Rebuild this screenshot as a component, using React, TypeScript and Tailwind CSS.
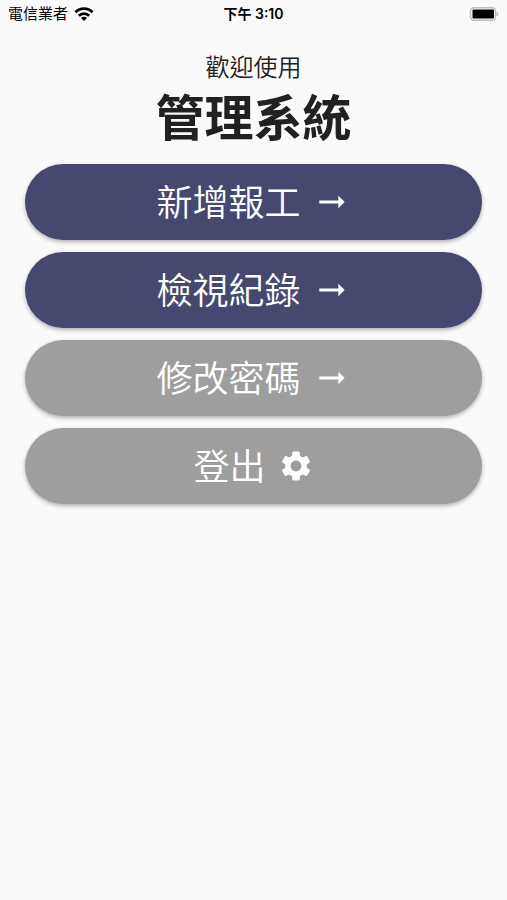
import { MdArrowRightAlt, MdSettings } from "react-icons/md";

interface MenuButtonProps {
  label: string;
  color: string;
  icon: "arrow" | "settings";
}

const MenuButton: React.FC<MenuButtonProps> = ({ label, color, icon }) => {
  return (
    <button
      type="button"
      className={`flex h-[76px] w-full items-center justify-center gap-3 rounded-full text-4xl font-[350] text-white shadow-[0_2px_4px_rgba(0,0,0,0.3)] ${color}`}
    >
      <span className="pt-0.5 leading-none">{label}</span>
      {icon === "arrow" ? <MdArrowRightAlt className="size-[38px]" /> : <MdSettings className="size-9" />}
    </button>
  );
};

const StatusBar = () => {
  return (
    <header className="grid h-7 grid-cols-3 items-center px-2 text-sm text-black">
      <div className="flex items-center gap-1.5">
        <span className="text-[15px]">電信業者</span>
        <svg viewBox="0 0 20 14" className="h-3.5 w-5" fill="none" stroke="currentColor" strokeWidth="2.8">
          <path d="M1.5 5.2a12 12 0 0 1 17 0" />
          <path d="M4.8 8.7a7.4 7.4 0 0 1 10.4 0" />
          <path d="M10 14 7 10.9a4.2 4.2 0 0 1 6 0Z" fill="currentColor" stroke="none" />
        </svg>
      </div>
      <time className="text-center font-semibold">下午 3:10</time>
      <svg viewBox="0 0 30 14" className="h-3.5 w-[30px] justify-self-end">
        <rect x="1.5" y="0.7" width="25" height="12.6" rx="3.5" fill="#fafafa" stroke="#bdbdbd" strokeWidth="1.4" />
        <rect x="3.5" y="2.6" width="21.5" height="8.8" rx="1" />
        <path d="M27.5 4.5c2.5 1 2.5 4 0 5Z" fill="#bdbdbd" />
      </svg>
    </header>
  );
};

export default function App() {
  return (
    <div className="min-h-screen bg-[#fafafa] font-['Inter','Noto_Sans_CJK_TC',sans-serif]">
      <StatusBar />
      <main className="px-[25px] pt-[22px]">
        <h1 className="text-center text-[#212121]">
          <span className="block text-2xl leading-9 font-[350]">歡迎使用</span>
          <span className="block text-[49px] leading-[66px] font-bold">管理系統</span>
        </h1>
        <nav className="mt-3 flex flex-col gap-3">
          <MenuButton label="新增報工" color="bg-[#46486f]" icon="arrow" />
          <MenuButton label="檢視紀錄" color="bg-[#46486f]" icon="arrow" />
          <MenuButton label="修改密碼" color="bg-[#9e9e9e]" icon="arrow" />
          <MenuButton label="登出" color="bg-[#9e9e9e]" icon="settings" />
        </nav>
      </main>
    </div>
  );
}
